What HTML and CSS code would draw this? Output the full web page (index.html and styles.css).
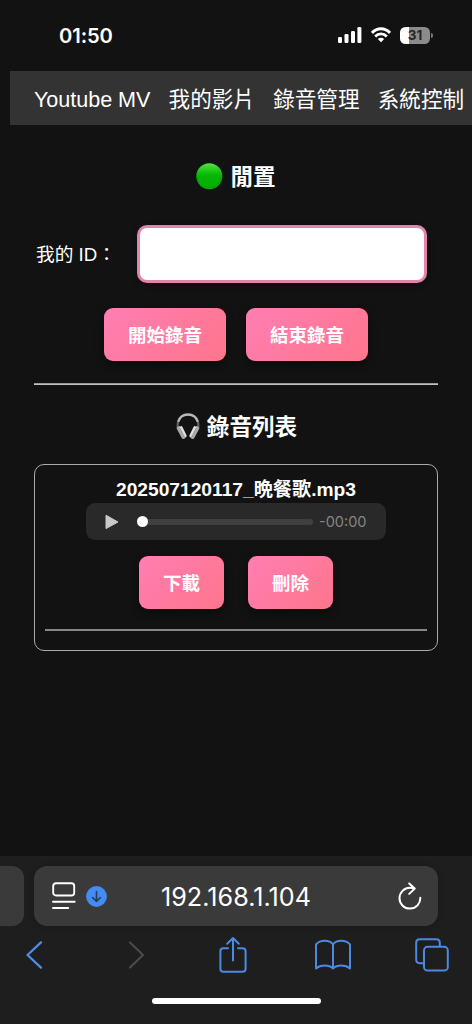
FILE: index.html
```html
<!DOCTYPE html>
<html lang="zh-Hant">
<head>
<meta charset="utf-8">
<meta name="viewport" content="width=device-width, initial-scale=1">
<title>錄音管理</title>
<link rel="stylesheet" href="styles.css">
</head>
<body>
<div class="phone">
  <header class="status">
    <span class="clock">01:50</span>
    <div class="indicators">
      <svg class="signal" width="24" height="16" viewBox="0 0 24 16" fill="#fff"><rect y="10" width="4" height="6" rx="1.2"/><rect x="6.5" y="7" width="4" height="9" rx="1.2"/><rect x="13" y="4" width="4" height="12" rx="1.2"/><rect x="19.4" width="4" height="16" rx="1.2"/></svg>
      <svg class="wifi" width="20" height="16" viewBox="0 0 20 16" fill="none" stroke="#fff" stroke-width="2.9"><path d="M1 5.9C6 .4 14 .4 19 5.9M4.2 9.4c3.3-3.4 8.3-3.4 11.6 0"/><path d="M6.8 12c1.8-1.7 4.6-1.7 6.4 0L10 15.2z" fill="#fff" stroke="none"/></svg>
      <span class="battery">31</span><span class="battery-tip"></span>
    </div>
  </header>
  <nav class="nav">
    <a class="latin">Youtube MV</a><a>我的影片</a><a>錄音管理</a><a>系統控制</a>
  </nav>
  <main class="main">
    <h2 class="heading state">
      <svg width="27" height="27" viewBox="0 0 27 27"><defs><linearGradient id="green" x1="0" y1="0" x2="0" y2="1"><stop offset="0" stop-color="#5be04a"/><stop offset=".3" stop-color="#18c914"/><stop offset=".48" stop-color="#05b404"/><stop offset="1" stop-color="#04b000"/></linearGradient></defs><circle cx="13.3" cy="13.2" r="13" fill="url(#green)"/><path d="M.8 13.5a12.6 12.6 0 0 0 25 0" fill="none" stroke="#07980a" stroke-width=".8"/></svg>
      <span>閒置</span>
    </h2>
    <div class="field"><label for="uid">我的 ID：</label><input id="uid" class="input" type="text"></div>
    <div class="actions"><button class="btn">開始錄音</button><button class="btn">結束錄音</button></div>
    <hr class="rule">
    <h2 class="heading list-title">
      <svg width="24" height="27" viewBox="0 0 24 27"><path d="M1.7 16V11.5a10.3 10.3 0 0 1 20.6 0V16" fill="none" stroke="#626262" stroke-width="2.2"/><path d="M2.2 8.8C5-.9 19-.9 21.8 8.8" fill="none" stroke="#b9b9b9" stroke-width="2.2"/><g stroke-linecap="round"><path d="M2.8 15.2l4.7 8.8M21.2 15.2l-4.7 8.8" stroke="#a9a9a9" stroke-width="4"/><path d="M5.1 14.5l4.2 8.4M18.9 14.5l-4.2 8.4" stroke="#dedede" stroke-width="2.8"/><path d="M4 15.4l4.3 8.2M20 15.4l-4.3 8.2" stroke="#888" stroke-width=".7"/></g></svg>
      <span>錄音列表</span>
    </h2>
    <section class="card">
      <strong class="filename">202507120117_晩餐歌.mp3</strong>
      <div class="player">
        <svg width="14" height="16" viewBox="0 0 14 16"><path d="M1 1.2v13.4L13 8z" fill="#c8c8c8" stroke="#c8c8c8" stroke-linejoin="round"/></svg>
        <span class="track"><span class="thumb"></span></span>
        <span class="time">-00:00</span>
      </div>
      <div class="actions file-actions"><button class="btn">下載</button><button class="btn">刪除</button></div>
      <hr class="rule card-rule">
    </section>
  </main>
  <footer class="browser">
    <div class="tabs">
      <span class="prev-tab"></span>
      <div class="address">
        <svg class="page-icon" width="24" height="28" viewBox="0 0 24 28" fill="none" stroke="#fff" stroke-width="1.9" stroke-linecap="round"><rect x="1.2" y="1.2" width="21" height="12.3" rx="2.8"/><path d="M1 19.8h21.7M1 26h15.2"/></svg>
        <svg class="download" width="21" height="21" viewBox="0 0 21 21"><circle cx="10.5" cy="10.5" r="10.4" fill="#448cf4"/><path d="M10.5 5.6v9.8M6.6 11.5l3.9 3.9 3.9-3.9" fill="none" stroke="#273d59" stroke-width="1.6" stroke-linecap="round" stroke-linejoin="round"/></svg>
        <span class="url">192.168.1.104</span>
        <svg class="reload" width="24" height="28" viewBox="0 0 24 28" fill="none" stroke="#fff" stroke-width="2" stroke-linecap="round" stroke-linejoin="round"><path d="M22.3 15.8A10.4 10.4 0 1 1 12 5.8c1.6 0 3.1.2 4.6.7M11.2 1.4l5.5 5.2-5.5 5.3"/></svg>
      </div>
    </div>
    <div class="toolbar">
      <svg width="17" height="28" viewBox="0 0 17 28" fill="none" stroke="#4d8ce8" stroke-width="2.3" stroke-linecap="round" stroke-linejoin="round"><path d="M15 1.4L1.5 14 15 26.6"/></svg>
      <svg class="forward" width="17" height="28" viewBox="0 0 17 28" fill="none" stroke="#4b4b4b" stroke-width="2.1" stroke-linecap="round" stroke-linejoin="round"><path d="M2 1.4L15 14 2 26.6"/></svg>
      <svg width="30" height="38" viewBox="0 0 30 38" fill="none" stroke="#4b89e2" stroke-width="2" stroke-linecap="round" stroke-linejoin="round"><path d="M10 12.3H5.4q-3 0-3 3v17.4q0 3.1 3 3.1h19.2q3 0 3-3.1V15.3q0-3-3-3H20M15 24.5V2.2M9.2 7.8L15 2l5.8 5.8"/></svg>
      <svg width="38" height="32" viewBox="0 0 38 32" fill="none" stroke="#4b89e2" stroke-width="2" stroke-linejoin="round"><path d="M19 5.5C15.5.8 6.5.5 2 5.5v24c4.5-4 13-4 17 0 4-4 12.5-4 17 0v-24C31.5.5 22.5.8 19 5.5zM19 5.5v24"/></svg>
      <svg width="34" height="34" viewBox="0 0 34 34" fill="none" stroke="#4b89e2" stroke-width="2"><rect x="9" y="8.8" width="23.8" height="23.8" rx="3.6"/><path d="M9 25.2H4.8q-3.6 0-3.6-3.6V4.8q0-3.6 3.6-3.6h16.4q3.6 0 3.6 3.6v4"/></svg>
    </div>
    <div class="home"></div>
  </footer>
</div>
</body>
</html>
```
FILE: styles.css
```css
* { box-sizing: border-box; }
body { margin: 0; background: #121212; color: #fff; font-family: "Liberation Sans", "Noto Sans CJK TC", sans-serif; }
svg { display: block; flex: none; }
.phone { width: 472px; height: 1024px; overflow: hidden; display: flex; flex-direction: column; }
.status { height: 71px; flex: none; display: flex; justify-content: space-between; padding: 24px 39px 0 59px; }
.clock { font: 600 20.2px/24px Inter, sans-serif; letter-spacing: -.1px; }
.indicators { display: flex; padding-top: 3px; }
.wifi { margin-left: 9px; }
.battery { width: 30px; height: 17px; margin-left: 9px; border-radius: 5.5px; background: linear-gradient(90deg, #fff 31%, #8b8b8b 31%); color: #252525; font: 700 13.5px/17px Inter, sans-serif; text-align: center; }
.battery-tip { width: 2px; height: 5px; margin: 6px 0 0 1px; border-radius: 0 2px 2px 0; background: #777; }
.nav { height: 54px; flex: none; margin-left: 10px; padding: 4px 0 0 24px; background: #333; display: flex; align-items: center; gap: 18.2px; font-size: 21.6px; line-height: 30px; white-space: nowrap; font-weight: 400; }
.nav .latin { letter-spacing: -.05px; }
.main { flex: 1; padding: 0 34px; }
.heading { margin: 0; display: flex; align-items: center; justify-content: center; font-size: 22.6px; line-height: 32px; font-weight: 700; }
.heading span { padding-top: 3px; line-height: 29px; }
.state { margin-top: 35px; gap: 7px; }
.field { margin-top: 33px; height: 58px; display: flex; align-items: center; padding-left: 2px; font-size: 18.7px; }
.field label { width: 101px; padding-bottom: 4px; white-space: nowrap; }
.input { width: 290px; height: 58px; border: 3px solid #e285ad; border-radius: 10px; background: #fff; padding: 12px; font-size: 18px; box-shadow: 0 2px 6px rgba(0, 0, 0, .3); }
.actions { margin-top: 25px; display: flex; justify-content: center; gap: 20px; }
.btn { height: 53px; padding: 2px 24px 0; border: 0; border-radius: 9px; background: linear-gradient(135deg, #ff7eb3, #ff758c); color: #fff; font: 700 18.5px/27px "Liberation Sans", "Noto Sans CJK TC", sans-serif; box-shadow: 0 4px 9px rgba(0, 0, 0, .4); }
.rule { height: 2px; margin: 22px 0 0; border: 0; background: linear-gradient(#979797 50%, #c1c1c1 50%); }
.list-title { margin-top: 25px; gap: 7px; padding-left: 1px; }
.card { margin-top: 22px; height: 187px; border: 1.5px solid #aaa; border-radius: 10px; padding: 12px 10px 0; display: flex; flex-direction: column; align-items: center; }
.filename { height: 26px; font-size: 19.2px; line-height: 26px; white-space: nowrap; }
.player { width: 300px; height: 37px; flex: none; border-radius: 9px; background: #292929; display: flex; align-items: center; padding: 0 19px; }
.track { display: flex; align-items: center; width: 176px; height: 6px; margin-left: 18px; border-radius: 3px; background: #404040; }
.thumb { width: 11px; height: 11px; border-radius: 50%; background: #fff; }
.time { margin-left: 6px; color: #858585; font: 14.5px/20px Inter, sans-serif; }
.file-actions { margin-top: 16px; gap: 24px; }
.card-rule { align-self: stretch; margin-top: 20px; background: #878787; }
.browser { height: 168px; flex: none; background: #1e1e1e; padding-top: 10px; }
.tabs { display: flex; gap: 10px; height: 60px; }
.prev-tab { width: 24px; background: #3a3a3a; border-radius: 0 12px 12px 0; }
.address { width: 404px; display: flex; align-items: center; padding: 0 16px 0 18px; border-radius: 13px; background: #3a3a3a; box-shadow: 0 1px 7px rgba(0, 0, 0, .18); }
.download { margin-left: 10px; }
.url { flex: 1; text-align: center; padding: 1px 33px 0 0; font: 25.2px/32px Inter, sans-serif; letter-spacing: 0; }
.toolbar { height: 58px; display: grid; grid-template-columns: repeat(5, 99.5px); align-items: center; justify-items: center; margin-left: -15.5px; }
.forward { margin-left: 6px; }
.home { width: 169px; height: 6px; margin: 14px auto 0; border-radius: 3px; background: #fff; }
```
